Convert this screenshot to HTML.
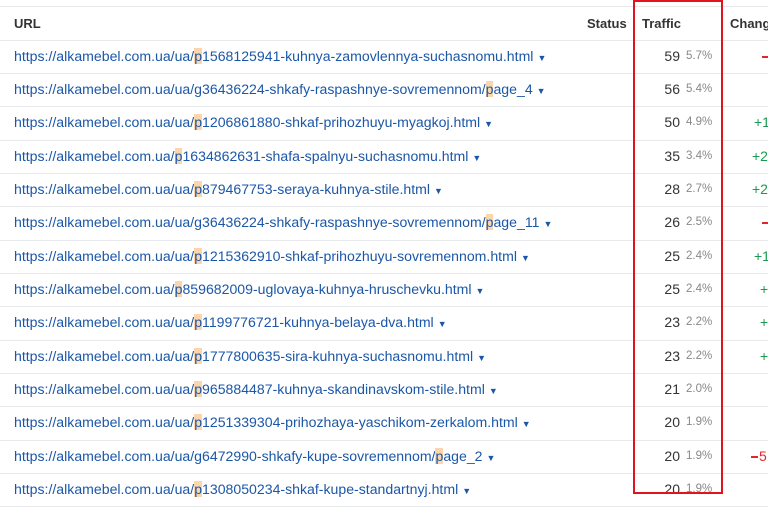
<!DOCTYPE html>
<html><head><meta charset="utf-8"><style>
body{margin:0;width:768px;height:511px;overflow:hidden;background:#fff;font-family:"Liberation Sans",sans-serif;position:relative}
.hl{position:absolute;left:0;width:768px;height:1px;background:#e8e9ec}
.h{position:absolute;top:16px;font-size:13px;font-weight:bold;color:#333}
.row{position:absolute;left:0;width:768px;height:33px}
.u{position:absolute;left:14px;top:8px;font-size:14.1px;color:#1b57a8;white-space:nowrap}
.u b{font-weight:normal;background:#fbd6ad}
.u i{font-style:normal;font-size:9px;color:#1b57a8;margin-left:4px}
.n{position:absolute;right:88px;top:8px;font-size:14px;color:#333}
.p{position:absolute;left:686px;top:10px;font-size:11.5px;color:#888}
.c{position:absolute;top:8px;font-size:14px}
.g{color:#1a9a50}.r{color:#e0262e}
.m{position:absolute;top:16px;height:1.5px;width:7px;background:#e0262e}
#box{position:absolute;left:633px;top:0;width:86px;height:490px;border:2px solid #e0141e}
</style></head><body>
<div class="hl" style="top:6px"></div>
<div class="h" style="left:14px">URL</div>
<div class="h" style="left:587px">Status</div>
<div class="h" style="left:642px">Traffic</div>
<div class="h" style="left:730px">Chang</div>
<div class="hl" style="top:40px"></div>

<div class="row" style="top:40px"><div class="u">https://alkamebel.com.ua/ua/<b>p</b>1568125941-kuhnya-zamovlennya-suchasnomu.html<i>▼</i></div><div class="n">59</div><div class="p">5.7%</div><div class="m" style="left:762px"></div></div>
<div class="hl" style="top:73px"></div>
<div class="row" style="top:73px"><div class="u">https://alkamebel.com.ua/ua/g36436224-shkafy-raspashnye-sovremennom/<b>p</b>age_4<i>▼</i></div><div class="n">56</div><div class="p">5.4%</div></div>
<div class="hl" style="top:106px"></div>
<div class="row" style="top:106px"><div class="u">https://alkamebel.com.ua/ua/<b>p</b>1206861880-shkaf-prihozhuyu-myagkoj.html<i>▼</i></div><div class="n">50</div><div class="p">4.9%</div><div class="c g" style="left:754px">+1</div></div>
<div class="hl" style="top:140px"></div>
<div class="row" style="top:140px"><div class="u">https://alkamebel.com.ua/<b>p</b>1634862631-shafa-spalnyu-suchasnomu.html<i>▼</i></div><div class="n">35</div><div class="p">3.4%</div><div class="c g" style="left:752px">+2</div></div>
<div class="hl" style="top:173px"></div>
<div class="row" style="top:173px"><div class="u">https://alkamebel.com.ua/ua/<b>p</b>879467753-seraya-kuhnya-stile.html<i>▼</i></div><div class="n">28</div><div class="p">2.7%</div><div class="c g" style="left:752px">+2</div></div>
<div class="hl" style="top:206px"></div>
<div class="row" style="top:206px"><div class="u">https://alkamebel.com.ua/ua/g36436224-shkafy-raspashnye-sovremennom/<b>p</b>age_11<i>▼</i></div><div class="n">26</div><div class="p">2.5%</div><div class="m" style="left:762px"></div></div>
<div class="hl" style="top:240px"></div>
<div class="row" style="top:240px"><div class="u">https://alkamebel.com.ua/ua/<b>p</b>1215362910-shkaf-prihozhuyu-sovremennom.html<i>▼</i></div><div class="n">25</div><div class="p">2.4%</div><div class="c g" style="left:754px">+1</div></div>
<div class="hl" style="top:273px"></div>
<div class="row" style="top:273px"><div class="u">https://alkamebel.com.ua/<b>p</b>859682009-uglovaya-kuhnya-hruschevku.html<i>▼</i></div><div class="n">25</div><div class="p">2.4%</div><div class="c g" style="left:760px">+</div></div>
<div class="hl" style="top:306px"></div>
<div class="row" style="top:306px"><div class="u">https://alkamebel.com.ua/ua/<b>p</b>1199776721-kuhnya-belaya-dva.html<i>▼</i></div><div class="n">23</div><div class="p">2.2%</div><div class="c g" style="left:760px">+</div></div>
<div class="hl" style="top:340px"></div>
<div class="row" style="top:340px"><div class="u">https://alkamebel.com.ua/ua/<b>p</b>1777800635-sira-kuhnya-suchasnomu.html<i>▼</i></div><div class="n">23</div><div class="p">2.2%</div><div class="c g" style="left:760px">+</div></div>
<div class="hl" style="top:373px"></div>
<div class="row" style="top:373px"><div class="u">https://alkamebel.com.ua/ua/<b>p</b>965884487-kuhnya-skandinavskom-stile.html<i>▼</i></div><div class="n">21</div><div class="p">2.0%</div></div>
<div class="hl" style="top:406px"></div>
<div class="row" style="top:406px"><div class="u">https://alkamebel.com.ua/ua/<b>p</b>1251339304-prihozhaya-yaschikom-zerkalom.html<i>▼</i></div><div class="n">20</div><div class="p">1.9%</div></div>
<div class="hl" style="top:440px"></div>
<div class="row" style="top:440px"><div class="u">https://alkamebel.com.ua/ua/g6472990-shkafy-kupe-sovremennom/<b>p</b>age_2<i>▼</i></div><div class="n">20</div><div class="p">1.9%</div><div class="m" style="left:751px"></div><div class="c r" style="left:759px">5</div></div>
<div class="hl" style="top:473px"></div>
<div class="row" style="top:473px"><div class="u">https://alkamebel.com.ua/ua/<b>p</b>1308050234-shkaf-kupe-standartnyj.html<i>▼</i></div><div class="n">20</div><div class="p">1.9%</div></div>
<div class="hl" style="top:506px"></div>
<div id="box"></div>
</body></html>
